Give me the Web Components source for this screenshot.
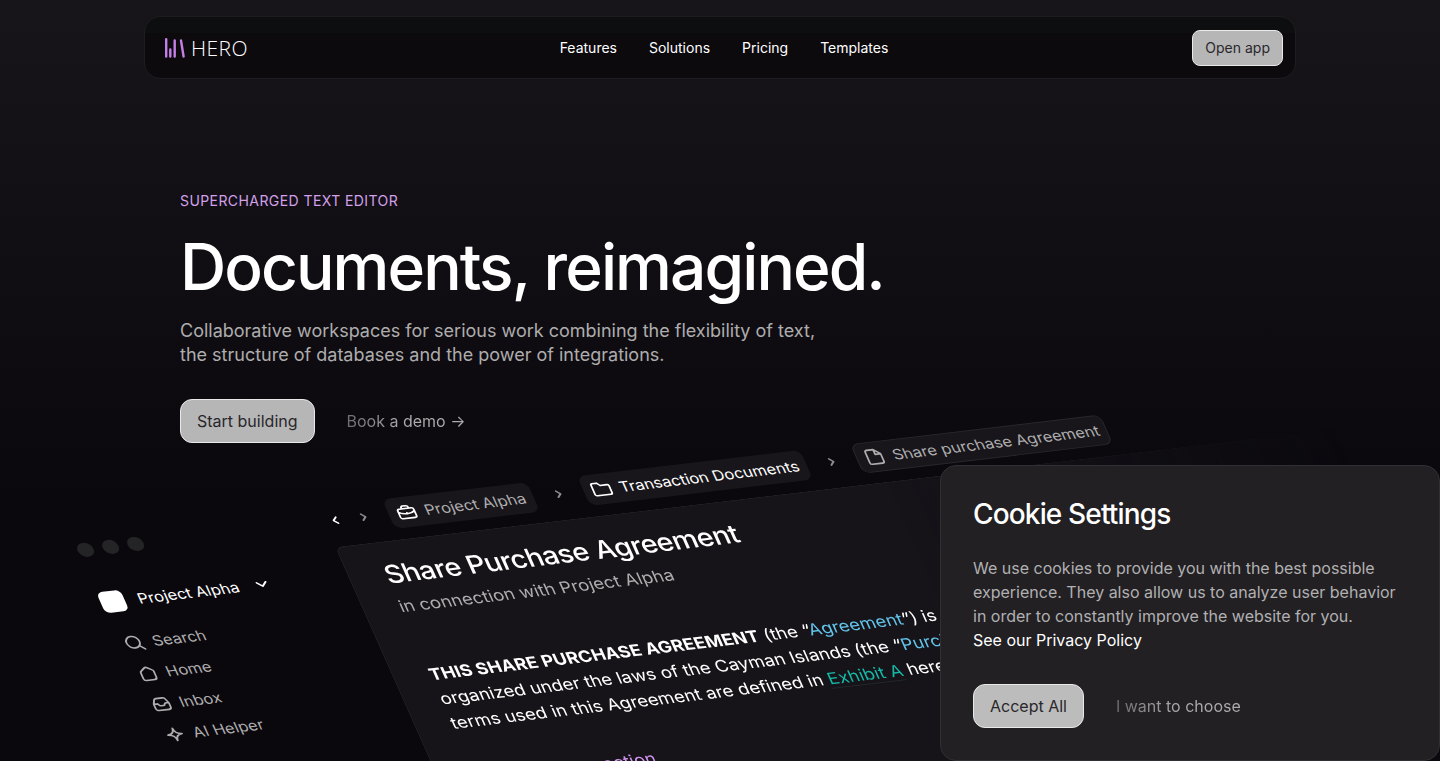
<!DOCTYPE html>
<html lang="en">
<head>
<meta charset="utf-8">
<meta name="viewport" content="width=device-width, initial-scale=1">
<title>Hero</title>
<style>
html{background:#09070b}
body{margin:0;font-family:Inter,"Liberation Sans",sans-serif;color:#fff}
</style>
</head>
<body>
<hero-page></hero-page>
<script>
const define = (name, html) => customElements.define(name, class extends HTMLElement {
  constructor() {
    super();
    const t = document.createElement('template');
    t.innerHTML = html;
    this.attachShadow({ mode: 'open' }).append(t.content.cloneNode(true));
  }
});

const ICONS = {
  search: '<circle cx="9" cy="9" r="6.5"/><path d="M14 14l4 4"/>',
  home: '<path d="M3.500 8.500c0-.8.3-1.300 1-1.800l4-3c.9-.7 2.100-.7 3 0l4 3c.7.500 1 1 1 1.800V15a2.500 2.500 0 0 1-2.500 2.500H6A2.500 2.500 0 0 1 3.500 15z"/>',
  inbox: '<path d="M2.500 9.500L4.500 5a2.500 2.500 0 0 1 2.300-1.500h6.400A2.500 2.500 0 0 1 15.500 5l2 4.500V14.500A2.500 2.500 0 0 1 15 17H5a2.500 2.500 0 0 1-2.500-2.500zM2.500 9.500H6c1 0 1 2.500 2.500 2.500h3c1.500 0 1.500-2.500 2.500-2.500h3.500"/>',
  spark: '<path d="M10 3c.6 4.500 1.800 6.200 7 7-5.200.8-6.400 2.500-7 7-.6-4.500-1.800-6.200-7-7 5.200-.8 6.400-2.500 7-7z"/>',
  case: '<path d="M4 6h12a2 2 0 0 1 2 2v7a2 2 0 0 1-2 2H4a2 2 0 0 1-2-2V8a2 2 0 0 1 2-2zM6.500 6V5a2 2 0 0 1 2-2h3a2 2 0 0 1 2 2v1M2 9.500c4.500 3.300 11.500 3.300 16 0M10 11v1"/>',
  folder: '<path d="M1.500 15V4.500A1.500 1.500 0 0 1 3 3h4.500l2.500 3h7a1.500 1.500 0 0 1 1.500 1.500V15a2 2 0 0 1-2 2h-13a2 2 0 0 1-2-2z"/>',
  file: '<path d="M11.500 2H5a2 2 0 0 0-2 2v12a2 2 0 0 0 2 2h10a2 2 0 0 0 2-2V7.500zM11.500 2v5.500h5.500"/>',
  left: '<path d="M11.500 6.500L8 10l3.500 3.500"/>',
  right: '<path d="M8.500 6.500L12 10l-3.500 3.500"/>',
  down: '<path d="M5.500 8l4.500 4.500L14.500 8"/>'
};
customElements.define('ui-icon', class extends HTMLElement {
  connectedCallback() {
    if (this.shadowRoot) return;
    this.attachShadow({ mode: 'open' }).innerHTML = `
      <style>:host{display:block;flex:none;width:20px;height:20px}svg{display:block;width:100%;height:100%;fill:none;stroke:currentColor;stroke-width:1.800;stroke-linecap:round;stroke-linejoin:round}</style>
      <svg viewBox="0 0 20 20" aria-hidden="true">${ICONS[this.getAttribute('name')]}</svg>`;
  }
});

define('solid-button', `
<style>
:host{display:block}
button{display:block;box-sizing:border-box;font:inherit;font-size:16px;line-height:24px;padding:9px 16px;color:#29272b;background:#b6b6b7;border:1px solid #e9e9ea;border-radius:12px;cursor:pointer}
:host([small]) button{font-size:14px;line-height:20px;padding:7px 12px;border-radius:8px}
:host([light]) button{background:#bcbcbc}
</style><button type="button"><slot></slot></button>`);

define('ghost-button', `
<style>
:host{display:block}
button{display:block;font:inherit;font-size:16px;line-height:24px;padding:0;border:0;cursor:pointer;color:transparent;background:linear-gradient(90deg,#6e6c6f,#aeadae 50%);-webkit-background-clip:text;background-clip:text}
</style><button type="button"><slot></slot></button>`);

define('site-header', `
<style>
:host{display:block;padding:16px 16px 0}
header{box-sizing:border-box;max-width:1152px;margin:0 auto;display:grid;grid-template-columns:1fr auto 1fr;align-items:center;padding:13px 12px 12px 20px;background:linear-gradient(#0d0e0f 0 16px,#0c0a0d 16px);border:1px solid #1e1c20;border-radius:16px}
.logo{display:flex;align-items:center;gap:6px;color:#fff;text-decoration:none;font-family:"Open Sans",sans-serif;font-weight:350;font-size:21px;line-height:24px;letter-spacing:0.02em}
.logo svg{width:20px;height:20px;stroke:#c57fe9;stroke-width:2.400;stroke-linecap:round}
nav{display:flex;gap:32px}
nav a{font-size:14px;line-height:20px;color:#fff;text-decoration:none}
solid-button{justify-self:end}
</style>
<header>
<a class="logo" href="#"><svg viewBox="0 0 20 20" aria-hidden="true"><path d="M1.200 1.200v17.300M5.300 11.500v7M9.700 2.500v16M16 2.500l2.600 16"/></svg><span>HERO</span></a>
<nav><a href="#features">Features</a><a href="#solutions">Solutions</a><a href="#pricing">Pricing</a><a href="#templates">Templates</a></nav>
<solid-button small>Open app</solid-button>
</header>`);

define('hero-intro', `
<style>
:host{display:block;box-sizing:border-box;max-width:1152px;margin:0 auto;padding:112px 36px 0}
p,h1{margin:0}
.eyebrow{font-size:14px;line-height:20px;color:#d3a0eb;letter-spacing:0.03em}
h1{font-size:64px;line-height:80px;font-weight:500;letter-spacing:-0.03em;margin-top:16px}
.lead{font-size:18px;line-height:24px;color:#aeadae;margin-top:12px}
.actions{display:flex;align-items:center;gap:32px;margin-top:32px}
</style>
<p class="eyebrow">SUPERCHARGED TEXT EDITOR</p>
<h1>Documents, reimagined.</h1>
<p class="lead">Collaborative workspaces for serious work combining the flexibility of text,<br>the structure of databases and the power of integrations.</p>
<div class="actions"><solid-button>Start building</solid-button><ghost-button>Book a demo →</ghost-button></div>`);

define('crumb-chip', `
<style>
:host{display:flex;align-items:center;gap:8px;padding:5px 8px;border-radius:8px;background:#18161b;font-size:16px;line-height:24px;white-space:nowrap;color:#aeadae}
:host([active]){color:#fff}
:host([outlined]){padding:4px 7px;border:1px solid #29272c}
</style><slot name="icon"></slot><span><slot></slot></span>`);

define('side-item', `
<style>
:host{display:flex;align-items:center;gap:8px;height:35px;padding-left:5px;font-size:16px;line-height:24px;color:#aeadae}
</style><slot name="icon"></slot><span><slot></slot></span>`);

define('app-sidebar', `
<style>
:host{display:block}
.dots{display:flex;gap:9px;align-items:center;height:34px}
.dots i{width:16px;height:16px;border-radius:50%;background:#242326}
.space{display:flex;align-items:center;margin-top:31px;height:24px;font-size:16px;line-height:24px}
.space b{width:24px;height:24px;border-radius:6px;background:#fff;margin-right:13px}
.space ui-icon{margin-left:13px}
nav{margin-top:18px}
</style>
<div class="dots"><i></i><i></i><i></i></div>
<div class="space"><b></b><span>Project Alpha</span><ui-icon name="down"></ui-icon></div>
<nav>
<side-item><ui-icon slot="icon" name="search"></ui-icon>Search</side-item>
<side-item><ui-icon slot="icon" name="home"></ui-icon>Home</side-item>
<side-item><ui-icon slot="icon" name="inbox"></ui-icon>Inbox</side-item>
<side-item><ui-icon slot="icon" name="spark"></ui-icon>AI Helper</side-item>
</nav>`);

define('app-document', `
<style>
:host{display:block}
.bar{display:flex;align-items:center;gap:15px;color:#8c8b8d}
.arrows{display:flex;gap:8px;padding-left:2px}
.arrows ui-icon:first-child{color:#fff}
.page{box-sizing:border-box;margin-top:12px;height:900px;padding:20px 35px;border:1px solid;border-color:#232126 transparent transparent #232126;border-radius:8px 0 0 0;background:#161419;-webkit-mask-image:linear-gradient(90deg,#000 540px,transparent 1000px);mask-image:linear-gradient(90deg,#000 540px,transparent 1000px)}
h2,h3,p{margin:0;white-space:nowrap}
h2{font-size:28px;line-height:32px;font-weight:500;letter-spacing:-0.02em}
.sub{font-size:18px;line-height:28px;color:#aeadae;margin-top:7px}
.text{font-size:18px;line-height:28px;margin-top:50px}
.blue{color:#62c4ea}
.teal{color:#14b8a6;border-bottom:1px solid #242c2e}
h3{font-size:18px;line-height:28px;font-weight:400;color:#d293f0;margin-top:36px}
</style>
<div class="bar">
<div class="arrows"><ui-icon name="left"></ui-icon><ui-icon name="right"></ui-icon></div>
<crumb-chip><ui-icon slot="icon" name="case" style="color:#fff"></ui-icon>Project Alpha</crumb-chip>
<ui-icon name="right"></ui-icon>
<crumb-chip active><ui-icon slot="icon" name="folder"></ui-icon>Transaction Documents</crumb-chip>
<ui-icon name="right"></ui-icon>
<crumb-chip outlined><ui-icon slot="icon" name="file"></ui-icon>Share purchase Agreement</crumb-chip>
</div>
<article class="page">
<h2>Share Purchase Agreement</h2>
<p class="sub">in connection with Project Alpha</p>
<p class="text"><b>THIS SHARE PURCHASE AGREEMENT</b> (the “<span class="blue">Agreement</span>”) is<br>organized under the laws of the Cayman Islands (the “<span class="blue">Purchaser</span>”)<br>terms used in this Agreement are defined in <span class="teal">Exhibit A</span> hereto</p>
<h3>Purchase connection</h3>
</article>`);

define('app-scene', `
<style>
:host{display:block;height:226px}
.plane{display:grid;grid-template-columns:246px 1400px;margin-left:calc(50% - 649px);transform-origin:0 0;transform:matrix(1,-0.118,0.387,0.87,0,0)}
</style>
<div class="plane"><app-sidebar></app-sidebar><app-document></app-document></div>`);

define('cookie-dialog', `
<style>
:host{position:fixed;right:0;bottom:0;box-sizing:border-box;width:500px;max-width:100%;padding:28px 32px 32px;background:#222023;border:1px solid #312f33;border-radius:16px}
h2,p{margin:0}
h2{font-size:28px;line-height:40px;font-weight:500;letter-spacing:-0.03em}
p{font-size:16px;line-height:24px;color:#b1b0b2;margin-top:22px}
a{color:#fff;text-decoration:none}
.actions{display:flex;align-items:center;gap:32px;margin-top:32px}
</style>
<h2>Cookie Settings</h2>
<p>We use cookies to provide you with the best possible experience. They also allow us to analyze user behavior in order to constantly improve the website for you.<br><a href="#privacy">See our Privacy Policy</a></p>
<div class="actions"><solid-button light>Accept All</solid-button><ghost-button>I want to choose</ghost-button></div>`);

define('hero-page', `
<style>
:host{display:block;box-sizing:border-box;height:100vh;overflow:hidden;background:linear-gradient(#171519,#0a080d 65%)}
app-scene{margin-top:93px}
</style>
<site-header></site-header>
<main><hero-intro></hero-intro><app-scene></app-scene></main>
<cookie-dialog role="dialog" aria-label="Cookie Settings"></cookie-dialog>`);
</script>
</body>
</html>
